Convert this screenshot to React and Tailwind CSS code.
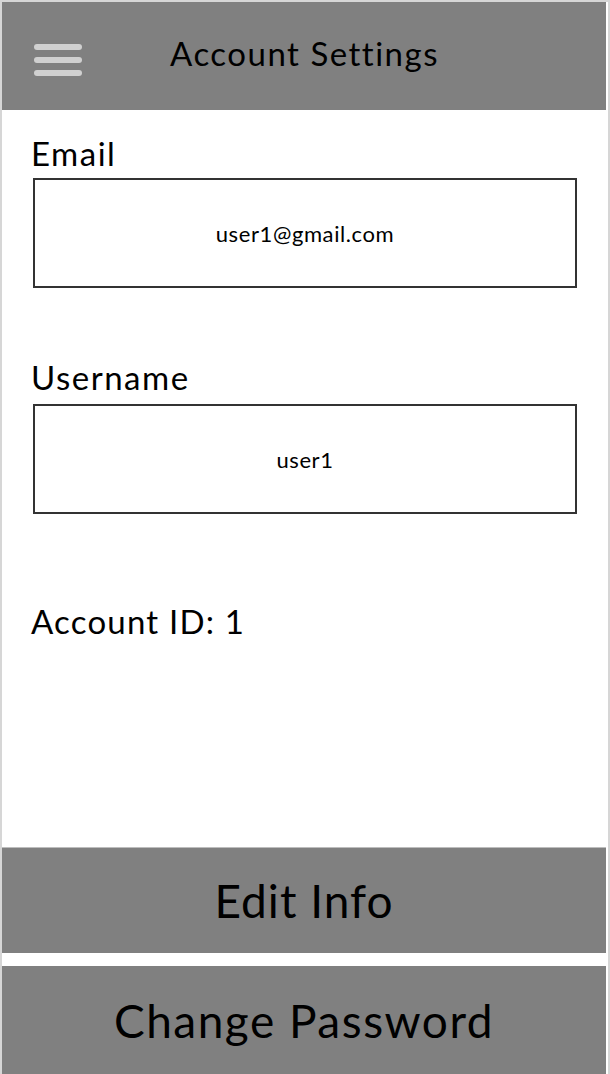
import React from "react";

export default function App() {
  return (
    <div
      className="w-[610px] h-[1074px] overflow-hidden bg-white border-l-2 border-t-2 border-r-2 border-[#d6d6d6] pr-[2px] flex flex-col text-black"
      style={{ fontFamily: "Lato, 'Noto Sans', sans-serif" }}
    >
      <header className="h-[108px] bg-[#808080] flex items-center shrink-0">
        <div className="w-[48px] ml-[32px] mt-[8px] flex flex-col gap-[7px]">
          <span className="block h-[6px] rounded-full bg-[#d0d0d0]" />
          <span className="block h-[6px] rounded-full bg-[#d0d0d0]" />
          <span className="block h-[6px] rounded-full bg-[#d0d0d0]" />
        </div>
        <h1 className="ml-[88px] mb-[6px] text-[33px] leading-none font-normal tracking-[1.5px]">
          Account Settings
        </h1>
      </header>

      <main className="flex-1 pl-[31px] pr-[29px] flex flex-col">
        <label className="mt-[22px] -ml-[2px] text-[33px] leading-[42px] tracking-[1.5px]">Email</label>
        <div className="mt-[4px] h-[110px] border-2 border-[#333] flex items-center justify-center text-[22px] tracking-[0.6px]">
          user1@gmail.com
        </div>
        <label className="mt-[68px] -ml-[2px] text-[33px] leading-[42px] tracking-[1.5px]">Username</label>
        <div className="mt-[6px] h-[110px] border-2 border-[#333] flex items-center justify-center text-[22px] tracking-[0.6px]">
          user1
        </div>
        <p className="mt-[86px] -ml-[2px] text-[33px] leading-[42px] tracking-[1.2px]">Account ID: 1</p>
      </main>

      <button className="h-[106px] bg-[#808080] border-t border-[#bdbdbd] text-[46px] tracking-[1px] shrink-0 flex items-center justify-center">
        Edit Info
      </button>
      <div className="h-[13px] shrink-0" />
      <button className="h-[108px] bg-[#808080] text-[46px] tracking-[1.5px] shrink-0 flex items-center justify-center">
        Change Password
      </button>
    </div>
  );
}
